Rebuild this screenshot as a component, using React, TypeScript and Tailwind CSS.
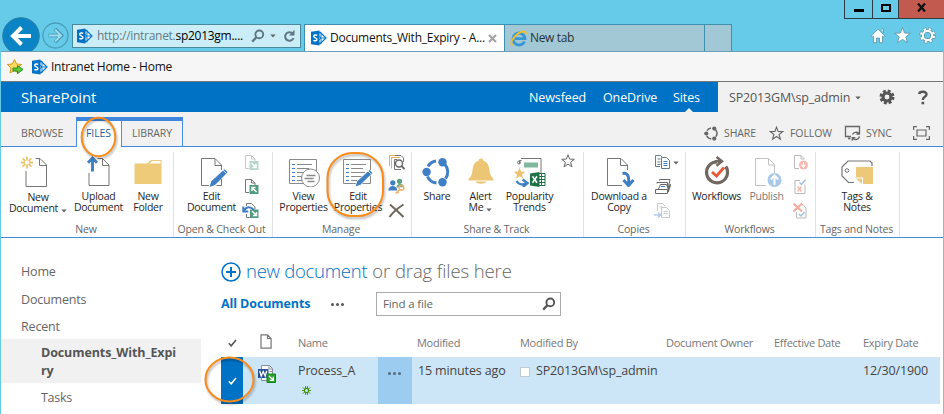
import React, { ReactNode } from 'react';

type IconProps = { children: ReactNode; w?: number; h?: number; className?: string };

/* One drawing unit is one pixel in every icon. */
function Icon({ children, w = 32, h = 32, className = '' }: IconProps) {
  return (
    <svg width={w} height={h} viewBox={`0 0 ${w} ${h}`} fill="none" className={`block shrink-0 ${className}`}>
      {children}
    </svg>
  );
}

const GREY = '#777777';
const BLUE = '#3f7fc4';

function SharePointLogo() {
  return (
    <Icon w={17} h={16}>
      <path d="M8 4l2-2 6 6-6 6-2-2" fill="#fff" stroke="#0072c6" strokeWidth="1.2" />
      <path d="M8 5.5l3 2.500-3 2.500M11 2.500v11M11.500 8H15" stroke="#0072c6" strokeWidth="1" />
      <path d="M1 1.800L9.500 .4v15.200l-8.500-1.400z" fill="#0072c6" />
      <path d="M7.200 5.400C5.800 4.600 3.700 4.900 3.700 6.300c0 1.700 3.300 1.300 3.300 3.100 0 1.600-2.200 1.600-3.700.9" stroke="#fff" strokeWidth="1.400" />
    </Icon>
  );
}

function Magnifier({ color = '#666' }: { color?: string }) {
  return (
    <Icon w={14} h={14}>
      <circle cx="8.300" cy="5.400" r="3.900" stroke={color} strokeWidth="1.900" />
      <path d="M5.400 8.300L1.200 12.600" stroke={color} strokeWidth="2.300" />
    </Icon>
  );
}

function Check({ color }: { color: string }) {
  return (
    <Icon w={9} h={8}>
      <path d="M.8 4.200L3.200 6.800L8 1" stroke={color} strokeWidth="1.600" />
    </Icon>
  );
}

function Caret({ className = '' }: { className?: string }) {
  return (
    <Icon w={6} h={4} className={className}>
      <path d="M.3.5h5.400L3 3.600z" fill="#666" />
    </Icon>
  );
}

function ShareRing({ size, color, sw }: { size: number; color: string; sw: number }) {
  return (
    <svg width={size} height={size} viewBox="0 0 30 30" fill="none" className="block shrink-0">
      <path d="M6 9.500A11 11 0 0 1 14 4M23 7.500A11 11 0 0 1 23.500 21.500M14.500 26A11 11 0 0 1 5.500 19.500" stroke={color} strokeWidth={sw} />
      <circle cx="20.500" cy="5.200" r="4.200" fill={color} />
      <circle cx="4.600" cy="15" r="4.200" fill={color} />
      <circle cx="20.500" cy="25.200" r="4.200" fill={color} />
    </svg>
  );
}

const STAR = 'M7 .8l1.600 4.300 4.700.2-3.700 2.900 1.300 4.600L7 10.200l-3.900 2.600 1.300-4.600L.7 5.300l4.700-.2z';

/* ---------- large ribbon icons ---------- */
const newDocIcon = (
  <Icon>
    <path d="M15.500 3.500h4.500l6.500 6.500V31.500h-20.500V16M19.500 4v6.500h6.500" stroke={GREY} />
    <path d="M7 1.500v4M7 9.500v4M1 7.500h4M9 7.500h4M2.500 3.300l3 2.800M11.500 3.300L8.500 6.100M2.500 11.700l3-2.800M11.500 11.700L8.500 8.900" stroke="#ecc66f" strokeWidth="1.800" />
  </Icon>
);
const uploadIcon = (
  <Icon>
    <path d="M14.500 3.500h5l6.500 6.500V30.500H6V18M19.500 4v6.500H26" stroke={GREY} />
    <path d="M9.500 16.500V2.500M5 7.800l4.500-4.700L14 7.800" stroke={BLUE} strokeWidth="2.900" />
  </Icon>
);
const folderIcon = (
  <Icon>
    <path d="M2.500 8.500H15l4-3.500h10.500V29h-27z" fill="#edcb78" />
    <path d="M17.500 8.500l2.700-2.600h8.300v2.600z" fill="#fff" />
  </Icon>
);
const editDocIcon = (
  <Icon>
    <path d="M12 30.500H4.500v-27H18l6.500 6.500v5M24.500 24v6.500h-5M18 4v6.500h6.500" stroke={GREY} />
    <path d="M12.500 32l1.800-5.800L27.500 14.200l3.200 3.100L18 29.900z" fill={BLUE} />
    <path d="M26.200 15.400l3.300 3.200" stroke="#fff" strokeWidth=".8" />
  </Icon>
);
const LISTING = (
  <g>
    <path d="M1.500 4.500h27v24h-27z" fill="#fff" stroke="#8a8a8a" />
    <path d="M4 9.500h3M4 13.500h3M4 17.500h3M4 21.500h3M4 25.500h3" stroke={BLUE} />
    <path d="M9 9.500h15M9 13.500h12M9 17.500h14M9 21.500h12M9 25.500h9" stroke="#8a8a8a" />
  </g>
);
const viewPropsIcon = (
  <Icon>
    {LISTING}
    <circle cx="22.500" cy="23" r="9" fill="#fff" stroke="#8a8a8a" />
    <path d="M18.500 20.500h9M16.500 23.500h9M19.500 26.500h7" stroke="#8a8a8a" strokeWidth="1.600" />
  </Icon>
);
const editPropsIcon = (
  <Icon>
    {LISTING}
    <path d="M13 32l1.800-5.800L27.500 14.700l3.400 3.300L18.300 30.200z" fill={BLUE} stroke="#fff" strokeWidth=".8" />
    <path d="M26 16l3.500 3.400" stroke="#fff" strokeWidth=".8" />
  </Icon>
);
const shareIcon = <ShareRing size={30} color={BLUE} sw={3} />;
const bellIcon = (
  <Icon>
    <path d="M16 3.500c2 0 2.200 1.500 2.500 2.300 4.800 1.400 5.500 6 6 9.700.5 4.500 2 6.500 4 8.500v1.500h-25V24c2-2 3.500-4 4-8.500.5-3.700 1.200-8.300 6-9.700.3-.8.5-2.300 2.500-2.300z" fill="#edc675" />
    <path d="M10.500 26.500h11c-1 3-10 3-11 0z" fill="#edc675" />
  </Icon>
);
const trendsIcon = (
  <Icon w={34}>
    <path d="M8 3.500h20v16M6.500 9V5.500h2" stroke={GREY} />
    <circle cx="6" cy="7.500" r="1.500" stroke={GREY} />
    <path d="M11 7.500h14v5H11z" fill="#7fb79f" />
    <path d="M6.500 12.500l1.500 4 4.300.2-3.300 2.700 1.100 4.200-3.600-2.400-3.600 2.400 1.100-4.200-3.300-2.700 4.300-.2z" fill="#ecc173" />
    <path d="M3.500 26c2 3.500 6 4 9.500 2.500M9.500 24.500l5 3.500-4.500 4" stroke={BLUE} strokeWidth="2.400" />
    <path d="M25 18.500h7v12h-7" fill="#fff" stroke="#1f7246" />
    <path d="M25 21.500h7M25 24.500h7M25 27.500h7M28.500 18.500v12" stroke="#1f7246" />
    <path d="M17 18.500l9.500-1.500v15L17 30.500z" fill="#1f7246" />
    <path d="M19.500 21.300l4.500 6.500M24 21.300l-4.500 6.500" stroke="#fff" strokeWidth="1.500" />
  </Icon>
);
const downloadIcon = (
  <Icon>
    <path d="M19 30.500H4.500v-27H18l6.500 6.500V15M17.500 4v6.500h6.500" stroke={GREY} />
    <path d="M19.500 18.500c5-1 7 3 6 10.500M20.500 25l5 5.500 5-5.500" stroke={BLUE} strokeWidth="3" />
  </Icon>
);
const workflowIcon = (
  <Icon>
    <path d="M24.800 11.500A10.500 10.500 0 1 1 16 6.800" stroke="#6f6760" strokeWidth="3.200" />
    <path d="M14 6.300h6M15.500 2l5.500 4.300-5.500 4.500" stroke="#6f6760" strokeWidth="2.400" />
    <path d="M11 17l4.500 4L23 12.500" stroke="#e8583a" strokeWidth="2.800" />
  </Icon>
);
const publishIcon = (
  <Icon>
    <path d="M14 30.500H3.500v-27h13l6 6V18M16.500 4v6h6" stroke="#c4c4c4" />
    <circle cx="22.500" cy="25" r="7" fill="#a8c8e8" />
    <path d="M22.500 30v-9M18.700 24.500l3.800-4 3.800 4" stroke="#fff" strokeWidth="2" />
  </Icon>
);
const tagsIcon = (
  <Icon w={34}>
    <path d="M14 27.500H8.500L2 21V12l6-6h22l2 2v3" stroke={GREY} strokeWidth="1.200" />
    <circle cx="7" cy="15.500" r="1.800" stroke={GREY} />
    <path d="M16 12h17v17H23v-6.500h-7z" fill="#edc878" />
    <path d="M16 23.500h6V29z" fill="#edc878" />
  </Icon>
);

/* ---------- small ribbon icons ---------- */
const checkoutIcon = (faded: boolean, out: boolean) => (
  <Icon w={16} h={17} className={faded ? 'opacity-40' : ''}>
    <path d="M6 14.500H2.500v-13H8.500l3.500 3.500v2M8.500 1.500V5h3.500" stroke={GREY} />
    <path d="M6.500 7h9v9h-9z" fill="#4f9d7c" />
    {out ? (
      <path d="M13.500 14L9 9.500M9 13V9.500h3.500" stroke="#fff" strokeWidth="1.500" />
    ) : (
      <path d="M8.500 9l4.500 4.500M13 10v3.500H9.500" stroke="#fff" strokeWidth="1.500" />
    )}
  </Icon>
);
const discardIcon = (
  <Icon w={17} h={17} className="-ml-px">
    <path d="M4.500 4V1.500H9.500L13 5v2M4.500 12v3.500H8" stroke={GREY} />
    <path d="M8 7.500h8.500V16H8z" fill="#4f9d7c" />
    <path d="M10 9l4.500 4.500M14.500 10v3.500H11" stroke="#fff" strokeWidth="1.500" />
    <path d="M2 9C4 4.500 8 4 12 8M1.300 4.500v5h5" stroke={BLUE} strokeWidth="2" />
  </Icon>
);
const versionIcon = (
  <Icon w={17} h={17}>
    <path d="M1.500 12V1.500H11M3.500 14.500V3.500H12" stroke="#e3ad62" />
    <path d="M6.500 15.500v-10H9M7 1.500h6l2.500 2.500V8M13 15.500H6.500" stroke={GREY} />
    <circle cx="11" cy="9.500" r="3.500" fill="#fff" stroke="#666" strokeWidth="1.400" />
    <path d="M13.500 12l3 3" stroke="#666" strokeWidth="1.800" />
  </Icon>
);
const sharedWithIcon = (
  <Icon w={17} h={17}>
    <circle cx="11.500" cy="3.300" r="2.600" fill="#5ba184" />
    <path d="M8.500 9.500c0-4.500 7-5 7.500-.5z" fill="#5ba184" />
    <circle cx="4.800" cy="4.800" r="2.600" fill={BLUE} />
    <path d="M.3 12.500c0-6 9-6 9 0z" fill={BLUE} />
    <circle cx="13.500" cy="9.700" r="2.400" stroke="#f0b36e" strokeWidth="1.500" />
    <path d="M12 11.300L7.500 15.500M8.800 13.500l1.800 1.800" stroke="#f0b36e" strokeWidth="1.600" />
  </Icon>
);
const deleteIcon = (
  <Icon w={17} h={17}>
    <path d="M2 2.500c4 3.500 8.500 7.500 13.500 12.500M15.500 2.500C10 6 5 10 1.500 15" stroke="#6d675c" strokeWidth="2" />
  </Icon>
);
const copyIcon = (
  <Icon w={17} h={17}>
    <path d="M6 12.500H1.500v-11h5L9 4M3.500 5h3M3.500 8h3M3.500 10.500h3" stroke="#687887" />
    <path d="M7.500 3.500h5l3 3v8h-8z" fill="#fff" stroke="#687887" />
    <path d="M9.500 7.500h4M9.500 9.500h4M9.500 11.500h4" stroke={BLUE} />
  </Icon>
);
const sendToIcon = (
  <Icon w={17} h={17}>
    <path d="M5.500 2.500V1.500h10.500L14 11M3 5.500V4.500h10.500v5" stroke="#666" />
    <path d="M4.500 11l2-4.500h6l2 4.500M1.500 11.500h12v4h-12z" stroke="#666" />
    <path d="M7 8.500h4" stroke={BLUE} />
    <path d="M14 14l2.500-8" stroke="#666" strokeWidth="1.500" />
  </Icon>
);
const manageCopiesIcon = (
  <Icon w={17} h={17} className="opacity-40">
    <path d="M3.500 9V1.500h5L11 4M5.500 5h3" stroke={GREY} />
    <path d="M7.500 5.500h5l3 3v7h-8z" fill="#fff" stroke={GREY} />
    <path d="M9.500 9.500h4M9.500 11.500h4" stroke={GREY} />
    <path d="M0 13h6M4 10.500L6.500 13 4 15.500" stroke={BLUE} strokeWidth="1.600" />
  </Icon>
);
const unpublishIcon = (
  <Icon w={16} h={17} className="opacity-50">
    <path d="M6 14.500H1.500v-13H8l3.500 3.500M8 1.500V5h3.500" stroke={GREY} />
    <circle cx="10.500" cy="11" r="4.500" fill="#ef7566" />
    <path d="M10.500 8v5M8.500 11l2 2 2-2" stroke="#fff" strokeWidth="1.300" />
  </Icon>
);
const approveIcon = (
  <Icon w={16} h={17} className="opacity-50">
    <path d="M7 2.500H2v13h10V6.500" stroke={GREY} />
    <path d="M6.500 4.500l2 2 4-5" stroke={BLUE} strokeWidth="1.500" />
    <path d="M4.500 8.500l4 5M8.500 8.500l-4 5" stroke="#ef6f55" strokeWidth="1.500" />
  </Icon>
);
const cancelApprovalIcon = (
  <Icon w={16} h={17} className="opacity-50">
    <path d="M3.500 10v6h9.500V6L10 2.500H9" stroke={GREY} />
    <path d="M.5 1.500l8.500 8M9 1.500L.5 9.500" stroke="#ef5540" strokeWidth="2" />
    <path d="M6 12l2 2 3.500-4" stroke={BLUE} strokeWidth="1.400" />
  </Icon>
);

type BigProps = { icon: ReactNode; lines: string[]; className: string; caret?: boolean; dim?: boolean; low?: boolean };

function BigButton({ icon, lines, className, caret, dim, low }: BigProps) {
  return (
    <div className={`flex shrink-0 flex-col items-center ${className}`}>
      <div className="flex h-[35px] items-end">{icon}</div>
      <div
        className={`flex flex-col items-center whitespace-nowrap text-[10.5px] leading-[11px] tracking-[-0.25px] ${
          low ? 'mt-[5px]' : 'mt-[4px]'
        } ${dim ? 'text-[#777]' : 'text-[#262626]'}`}
      >
        {lines.map((line, i) => (
          <span key={line} className="flex items-center">
            {line}
            {caret && i === lines.length - 1 && <Caret className="ml-[3px] mt-[5px]" />}
          </span>
        ))}
      </div>
    </div>
  );
}

function Group({ label, className, children }: { label: string; className: string; children: ReactNode }) {
  return (
    <div className={`flex h-[85px] shrink-0 flex-col border-r border-[#e1e1e1] ${className}`}>
      <div className="flex h-[70px]">{children}</div>
      <div className="whitespace-nowrap text-center text-[10.5px] leading-[15px] tracking-[-0.15px] text-[#666]">{label}</div>
    </div>
  );
}

function SmallColumn({ children, className = '' }: { children: ReactNode; className?: string }) {
  return <div className={`flex shrink-0 flex-col gap-[7px] pt-[2px] ${className}`}>{children}</div>;
}

function TitleBar() {
  return (
    <div className="flex h-[51px] w-full overflow-hidden">
      <div className="flex h-[51px] items-start pl-[2px] pt-[17px]">
        <Icon w={38} h={38}>
          <circle cx="19" cy="19" r="18.300" fill="#0a84c4" stroke="#2a82a5" />
          <path d="M29 19H11M19.500 10.500L11 19l8.500 8.500" stroke="#fff" strokeWidth="4" />
        </Icon>
        <Icon w={27} h={27} className="ml-[2px] mt-[5px]">
          <circle cx="13.500" cy="13.500" r="12.500" stroke="#4a9dbb" strokeWidth="1.300" />
          <path d="M6.500 13.500h12.500M13 7l6.500 6.500L13 20" stroke="#4494b5" strokeWidth="3.600" />
          <path d="M7 13.500h12M13.200 7.700l5.800 5.800-5.800 5.800" stroke="#9fdcf0" strokeWidth="2" />
        </Icon>
      </div>
      <div className="ml-[3px] mt-[24px] flex h-[24px] w-[229px] items-center border border-[#49899c] bg-[#cbedf7] pl-[3px]">
        <SharePointLogo />
        <span className="ml-[4px] w-[150px] whitespace-nowrap text-[12px] leading-4 tracking-[-0.28px] text-[#647b83]">
          http://intranet.<span className="text-black">sp2013gm....</span>
        </span>
        <div className="ml-[4px] flex items-center">
          <Magnifier color="#5f777f" />
          <Caret className="ml-[5px]" />
          <Icon w={13} h={14} className="ml-[7px]">
            <path d="M9.800 4.800A4.300 4.300 0 1 0 10.500 9" stroke="#5f777f" strokeWidth="2" />
            <path d="M11.500.8v5.700H6z" fill="#5f777f" />
          </Icon>
        </div>
      </div>
      <div className="ml-[3px] mt-[24px] flex h-[27px] w-[201px] items-center border-x border-t border-[#3f8fae] bg-white pl-[5px]">
        <SharePointLogo />
        <span className="ml-[3px] w-[158px] whitespace-nowrap text-[12px] leading-4 tracking-[-0.25px] text-[#111]">
          Documents_With_Expiry - A...
        </span>
        <Icon w={9} h={9}>
          <path d="M1 1l7 7M8 1L1 8" stroke="#a3a3a3" strokeWidth="2.200" />
        </Icon>
      </div>
      <div className="mt-[24px] flex h-[27px] w-[200px] items-center border-r border-t border-[#3f8fae] bg-[#a2c7d5] pl-[5px]">
        <Icon w={17} h={17}>
          <path d="M14.500 11.500A6 6 0 1 1 15 8.700H5" stroke="#3598d6" strokeWidth="2.800" />
          <path d="M2.500 15.500C-1.500 12 7 1.500 14 1.500c2 0 2.200 1.500 1.300 3" stroke="#f5bd23" strokeWidth="1.800" />
        </Icon>
        <span className="ml-[3px] whitespace-nowrap text-[12px] leading-4 tracking-[-0.35px] text-[#26343a]">New tab</span>
      </div>
      <div className="mt-[24px] h-[27px] w-[27px] border-r border-t border-[#3f8fae] bg-[#a2c7d5]" />
      <div className="ml-auto flex w-[100px] flex-col">
        <div className="flex h-[19px] w-[100px] border-b border-l border-[#2f3b40]">
          <div className="flex w-[28px] items-center justify-center border-r border-[#2f3b40]">
            <div className="mt-[2px] h-[3px] w-[10px] bg-black" />
          </div>
          <div className="flex w-[26px] items-center justify-center border-r border-[#2f3b40]">
            <div className="mt-[-3px] h-[8px] w-[10px] border-2 border-black" />
          </div>
          <div className="flex flex-1 items-center justify-center bg-[#c35a50]">
            <Icon w={9} h={9} className="mb-[3px]">
              <path d="M1 .5l7 8M8 .5l-7 8" stroke="#111" strokeWidth="2.300" />
            </Icon>
          </div>
        </div>
        <div className="mt-[8px] flex gap-[8px] pl-[26px]">
          <Icon w={16} h={17}>
            <path d="M1 9.200l7-7 7 7-1 1-1.500-1v6.500H9.500V11h-3v4.700H3.500V9.200l-1.500 1zM11.500 2h2v4" fill="#fff" stroke="#5d8d9e" strokeWidth=".8" />
          </Icon>
          <Icon w={17} h={17}>
            <path d="M8.500 .5l2 5.500 5.900.3-4.600 3.600 1.600 5.700-4.900-3.200-4.900 3.200 1.600-5.700L.6 6.300 6.500 6z" fill="#fff" stroke="#5d8d9e" strokeWidth=".8" />
          </Icon>
          <Icon w={17} h={17}>
            <circle cx="8.500" cy="8.500" r="6.400" stroke="#4d8396" strokeWidth="3.400" strokeDasharray="3 2.026" />
            <circle cx="8.500" cy="8.500" r="4.600" stroke="#4d8396" strokeWidth="3.400" />
            <circle cx="8.500" cy="8.500" r="6.400" stroke="#fff" strokeWidth="2.400" strokeDasharray="2.300 2.726" strokeDashoffset="-.35" />
            <circle cx="8.500" cy="8.500" r="4.600" stroke="#fff" strokeWidth="2.100" />
          </Icon>
        </div>
      </div>
    </div>
  );
}

function SuiteBar() {
  return (
    <div className="flex h-[30px] shrink-0">
      <div className="flex w-[717px] bg-[#0072c6] text-white">
        <span className="w-[528px] pl-[20px] text-[15px] leading-[31px] tracking-[-0.15px]">SharePoint</span>
        <div className="flex text-[12.5px] leading-[31px] tracking-[-0.1px]">
          <span className="w-[74px]">Newsfeed</span>
          <span className="w-[70px]">OneDrive</span>
          <span className="relative">
            Sites
            <svg width="8" height="4" viewBox="0 0 8 4" className="absolute bottom-0 left-[12px]">
              <path d="M0 4l4-4 4 4z" fill="#f1f1f1" />
            </svg>
          </span>
        </div>
      </div>
      <div className="flex flex-1 items-center bg-[#f1f1f1] pl-[11px] text-[#555]">
        <span className="w-[122px] text-[12.5px] leading-[31px] tracking-[-0.16px]">SP2013GM\sp_admin</span>
        <Caret className="ml-[4px] mt-[2px]" />
        <Icon w={16} h={16} className="ml-[18px]">
          <circle cx="8" cy="8" r="6.200" stroke="#555" strokeWidth="2.600" strokeDasharray="2.870 2" />
          <circle cx="8" cy="8" r="4" stroke="#555" strokeWidth="3.200" />
        </Icon>
        <Icon w={10} h={15} className="ml-[23px]">
          <path d="M1.200 4C1.500 1.200 8.800.8 8.500 4.500 8.300 7 4.800 6.800 4.800 10" stroke="#555" strokeWidth="2.400" />
          <path d="M3.500 11.800h2.700v2.500H3.500z" fill="#555" />
        </Icon>
      </div>
    </div>
  );
}

function RibbonTabs() {
  return (
    <div className="relative z-10 flex h-[35px] shrink-0 border-b border-[#3f8bdc] bg-[#f1f1f1] text-[10.5px] tracking-[-0.1px] text-[#666]">
      <span className="w-[75px] pl-[20px] pt-[14px] leading-[15px]">BROWSE</span>
      <div className="relative mt-[5px] flex h-[30px] w-[107px] border-t-4 border-[#3f86de]">
        <div className="w-[46px] border-x border-[#4a90e2] bg-white pl-[9px] pt-[5px] leading-[15px] text-[#2a5f9f]">FILES</div>
        <div className="h-[25px] flex-1 border-r border-[#4a90e2] pl-[10px] pt-[5px] leading-[15px]">LIBRARY</div>
        <svg width="46" height="52" viewBox="0 0 46 52" fill="none" className="absolute left-0 top-[-10px] drop-shadow-[1px_2px_1px_rgba(0,0,0,0.3)]">
          <ellipse cx="22.500" cy="26" rx="16.800" ry="19.300" stroke="#f88c1c" strokeWidth="2" />
        </svg>
      </div>
      <div className="ml-auto flex h-[34px] items-center pt-[8px]">
        <div className="flex h-[17px] items-center">
          <ShareRing size={15} color="#666" sw={3} />
          <span className="ml-[5px] w-[45px] leading-[15px]">SHARE</span>
          <Icon w={15} h={15}>
            <path d={STAR} stroke="#666" strokeWidth="1.100" transform="translate(.5 .3)" />
          </Icon>
          <span className="ml-[6px] w-[54px] leading-[15px]">FOLLOW</span>
          <Icon w={17} h={16}>
            <path d="M15.500 6V1.500h-14v10H7M4 13.500h2.500" stroke="#666" strokeWidth="1.300" />
            <path d="M8.500 9.500A4 4 0 0 1 15 8.500M15.500 11.500A4 4 0 0 1 9 13.500M15.500 6v3h-3M8.300 15.800V12.700h3" stroke="#666" strokeWidth="1.300" />
          </Icon>
          <span className="ml-[5px] w-[47px] leading-[15px]">SYNC</span>
          <Icon w={17} h={14} className="mr-[13px]">
            <path d="M4 .6H.6V4M13 .6h3.400V4M4 13.400H.6V10M13 13.400h3.400V10" stroke="#666" strokeWidth="1.200" />
            <path d="M4 4h9v6H4z" stroke="#666" strokeWidth="1.200" />
          </Icon>
        </div>
      </div>
    </div>
  );
}

function Ribbon() {
  return (
    <div className="relative flex h-[91px] shrink-0 border-b border-[#3f8bdc] bg-white pt-[5px]">
      <Group label="New" className="w-[173px] pr-[2px]">
        <BigButton className="w-[74px]" icon={<div className="mr-[4px]">{newDocIcon}</div>} lines={['New', 'Document']} caret low />
        <BigButton className="w-[47px]" icon={uploadIcon} lines={['Upload', 'Document']} />
        <BigButton className="w-[52px]" icon={folderIcon} lines={['New', 'Folder']} />
      </Group>
      <Group label="Open & Check Out" className="w-[99px] pr-[3px]">
        <BigButton className="ml-[7px] w-[61px]" icon={<div className="ml-[3px]">{editDocIcon}</div>} lines={['Edit', 'Document']} />
        <SmallColumn className="ml-[1px]">
          {checkoutIcon(true, false)}
          {checkoutIcon(false, true)}
          {discardIcon}
        </SmallColumn>
      </Group>
      <Group label="Manage" className="w-[139px] pr-[2px]">
        <BigButton className="w-[61px]" icon={<div className="ml-[1px]">{viewPropsIcon}</div>} lines={['View', 'Properties']} />
        <BigButton className="w-[48px]" icon={editPropsIcon} lines={['Edit', 'Properties']} />
        <SmallColumn className="ml-[6px]">
          {versionIcon}
          {sharedWithIcon}
          {deleteIcon}
        </SmallColumn>
      </Group>
      <Group label="Share & Track" className="w-[172px] pr-[2px]">
        <BigButton className="w-[50px]" icon={shareIcon} lines={['Share']} />
        <BigButton className="w-[37px]" icon={bellIcon} lines={['Alert', 'Me']} caret />
        <BigButton className="w-[61px]" icon={trendsIcon} lines={['Popularity', 'Trends']} />
        <SmallColumn className="ml-[1px]">
          <Icon w={14} h={15}>
            <path d={STAR} stroke="#666" />
          </Icon>
        </SmallColumn>
      </Group>
      <Group label="Copies" className="w-[102px] pr-[2px]">
        <BigButton className="w-[70px]" icon={<div>{downloadIcon}</div>} lines={['Download a', 'Copy']} />
        <SmallColumn>
          <div className="flex items-center gap-[2px]">
            {copyIcon}
            <Caret />
          </div>
          {sendToIcon}
          {manageCopiesIcon}
        </SmallColumn>
      </Group>
      <Group label="Workflows" className="w-[130px] pr-[2px]">
        <BigButton className="w-[61px]" icon={workflowIcon} lines={['Workflows']} />
        <BigButton className="w-[39px]" icon={<div className="ml-[2px]">{publishIcon}</div>} lines={['Publish']} dim />
        <SmallColumn className="ml-[7px]">
          {unpublishIcon}
          {approveIcon}
          {cancelApprovalIcon}
        </SmallColumn>
      </Group>
      <Group label="Tags and Notes" className="w-[84px] pr-[2px]">
        <BigButton className="w-[82px]" icon={tagsIcon} lines={['Tags &', 'Notes']} />
      </Group>
      <svg width="66" height="76" viewBox="0 0 66 76" fill="none" className="absolute left-[321px] top-0 drop-shadow-[1px_2px_1px_rgba(0,0,0,0.3)]">
        <rect x="5.500" y="6" width="55.500" height="63" rx="25" stroke="#f88c1c" strokeWidth="2" />
      </svg>
    </div>
  );
}

function SideNav() {
  return (
    <nav className="w-[200px] shrink-0 pt-[25px] text-[12.5px] leading-[18px] tracking-[-0.17px] text-[#666]">
      <div className="h-[27.500px] pl-[20px]">Home</div>
      <div className="h-[27.500px] pl-[20px]">Documents</div>
      <div className="h-[21px] pl-[20px]">Recent</div>
      <div className="h-[44px] bg-[#f1f1f1] pl-[40px] pt-[5px] text-[12.5px] font-bold tracking-[-0.1px] text-[#555]">
        Documents_With_Expi
        <br />
        ry
      </div>
      <div className="pl-[40px] pt-[6px] tracking-[-0.3px]">Tasks</div>
    </nav>
  );
}

function DocumentList() {
  return (
    <div className="w-[719px] text-[#666]">
      <div className="flex h-[26px] items-center whitespace-nowrap text-[18.500px] font-light leading-[26px] tracking-[-0.26px]">
        <Icon w={20} h={20} className="mr-[5px] mt-[1px]">
          <circle cx="10" cy="10" r="9" stroke="#0072c6" strokeWidth="1.500" />
          <path d="M10 5v10M5 10h10" stroke="#0072c6" strokeWidth="2" />
        </Icon>
        <span className="mr-[5px] text-[#0072c6]">new document</span>
        <span className="tracking-[-0.1px] text-[#666]">or drag files here</span>
      </div>
      <div className="mt-[8px] flex h-[24px] items-center">
        <span className="w-[110px] whitespace-nowrap text-[12.500px] font-bold leading-[18px] tracking-[-0.1px] text-[#0072c6]">All Documents</span>
        <div className="flex w-[45px] gap-[2px]">
          <i className="h-[3px] w-[3px] rounded-full bg-[#555]" />
          <i className="h-[3px] w-[3px] rounded-full bg-[#555]" />
          <i className="h-[3px] w-[3px] rounded-full bg-[#555]" />
        </div>
        <div className="flex h-[24px] w-[185px] items-center justify-between border border-[#ababab] pl-[6px] pr-[4px] text-[11.500px] leading-[18px] tracking-[-0.15px]">
          <span>Find a file</span>
          <Magnifier color="#555" />
        </div>
      </div>
      <div className="mb-[2px] mt-[15px] flex h-[24px] items-center whitespace-nowrap text-[11px] leading-[16px] tracking-[-0.28px] text-[#777]">
        <div className="w-[39px] pl-[7px]">
          <Check color="#555" />
        </div>
        <Icon w={12} h={15} className="mr-[26px] mt-[-3px]">
          <path d="M1 .9h6.500l3.600 3.600v9.600H1zM7.500 1v3.500H11" stroke="#777" strokeWidth="1.200" />
        </Icon>
        <span className="w-[119px]">Name</span>
        <span className="w-[103px]">Modified</span>
        <span className="w-[146px]">Modified By</span>
        <span className="w-[108px]">Document Owner</span>
        <span className="w-[89px]">Effective Date</span>
        <span>Expiry Date</span>
      </div>
      <div className="relative flex h-[47px] whitespace-nowrap bg-[#cde6f7] text-[12.500px] leading-[18px] tracking-[-0.14px] text-[#444]">
        <div className="flex w-[22px] items-center justify-center bg-[#0072c6]">
          <Check color="#fff" />
        </div>
        <Icon w={19} h={19} className="ml-[14px] mt-[7px]">
          <path d="M4.500 1.500h8l3 3v12h-11z" fill="#fff" stroke="#8b8ba0" />
          <path d="M12 1.500V5h3.500M12.500 7.500H15" stroke="#8b8ba0" />
          <path d="M1 5h10.500v9H1z" fill="#2b5197" />
          <path d="M2.700 6.800l1.500 5.200L6.200 7.500 8.200 12l1.500-5.200" stroke="#fff" strokeWidth="1.300" />
          <path d="M10 10h8.500v8.500H10z" fill="#2ca42c" stroke="#14841a" />
          <path d="M12 12l4.300 4.300M16.300 12.800v3.500h-3.500" stroke="#fff" strokeWidth="1.300" />
        </Icon>
        <div className="ml-[22px] w-[80px] pt-[5px]">
          Process_A
          <Icon w={9} h={9} className="ml-[4px] mt-[6px]">
            <circle cx="4.500" cy="4.500" r="2.100" stroke="#3a9100" strokeWidth="1.100" />
            <path d="M3.500 0v2.500M5.500 0v2.500M3.500 6.500V9M5.500 6.500V9M0 4.500h2.500M6.500 4.500H9M.8 1.300l2 2M8.200 1.300l-2 2M.8 7.700l2-2M8.200 7.700l-2-2" stroke="#3a9100" strokeWidth=".9" />
          </Icon>
        </div>
        <div className="flex w-[34px] gap-[2px] bg-[#9ccdf0] pl-[10px] pt-[15px]">
          <i className="h-[3px] w-[3px] rounded-full bg-[#556b7c]" />
          <i className="h-[3px] w-[3px] rounded-full bg-[#556b7c]" />
          <i className="h-[3px] w-[3px] rounded-full bg-[#556b7c]" />
        </div>
        <span className="w-[108px] pl-[6px] pt-[5px]">15 minutes ago</span>
        <div className="mt-[10px] h-[10px] w-[10px] border border-[#c3c9ce] bg-white" />
        <span className="w-[333px] pl-[6px] pt-[5px]">SP2013GM\sp_admin</span>
        <span className="pt-[5px]">12/30/1900</span>
        <svg width="56" height="54" viewBox="0 0 56 54" fill="none" className="absolute left-[-19px] top-[-4px] drop-shadow-[1px_2px_1px_rgba(0,0,0,0.3)]">
          <ellipse cx="27.500" cy="26.500" rx="24" ry="22" stroke="#f88c1c" strokeWidth="2" />
        </svg>
      </div>
    </div>
  );
}

export default function App() {
  return (
    <div className="flex h-[414px] w-[944px] flex-col overflow-hidden bg-[#66cae9] font-['Open_Sans','Noto_Sans',sans-serif]">
      <TitleBar />
      <div className="mx-px flex h-[363px] flex-col border-t border-[#6b9fb5] bg-white">
        <div className="flex h-[30px] shrink-0 items-center border-b border-[#777] bg-[#f6f6f6] pl-[5px]">
          <Icon w={18} h={17}>
            <path d="M8.500 1.500l2 4.500 5 .5-3.700 3.500 1 5-4.300-2.500-4.500 2.500 1-5L1.300 6.500l5-.5z" fill="#ffdc5e" stroke="#d39a20" />
            <path d="M7 10h4.500V7.500l5.500 4-5.500 4V13H7z" fill="#5dcb3d" stroke="#278e22" />
          </Icon>
          <span className="ml-[7px]">
            <SharePointLogo />
          </span>
          <span className="ml-[3px] text-[12px] leading-4 tracking-[-0.25px] text-[#111]">Intranet Home - Home</span>
        </div>
        <SuiteBar />
        <RibbonTabs />
        <Ribbon />
        <div className="flex flex-1">
          <SideNav />
          <div className="pl-[20px] pt-[20px]">
            <DocumentList />
          </div>
        </div>
      </div>
    </div>
  );
}
